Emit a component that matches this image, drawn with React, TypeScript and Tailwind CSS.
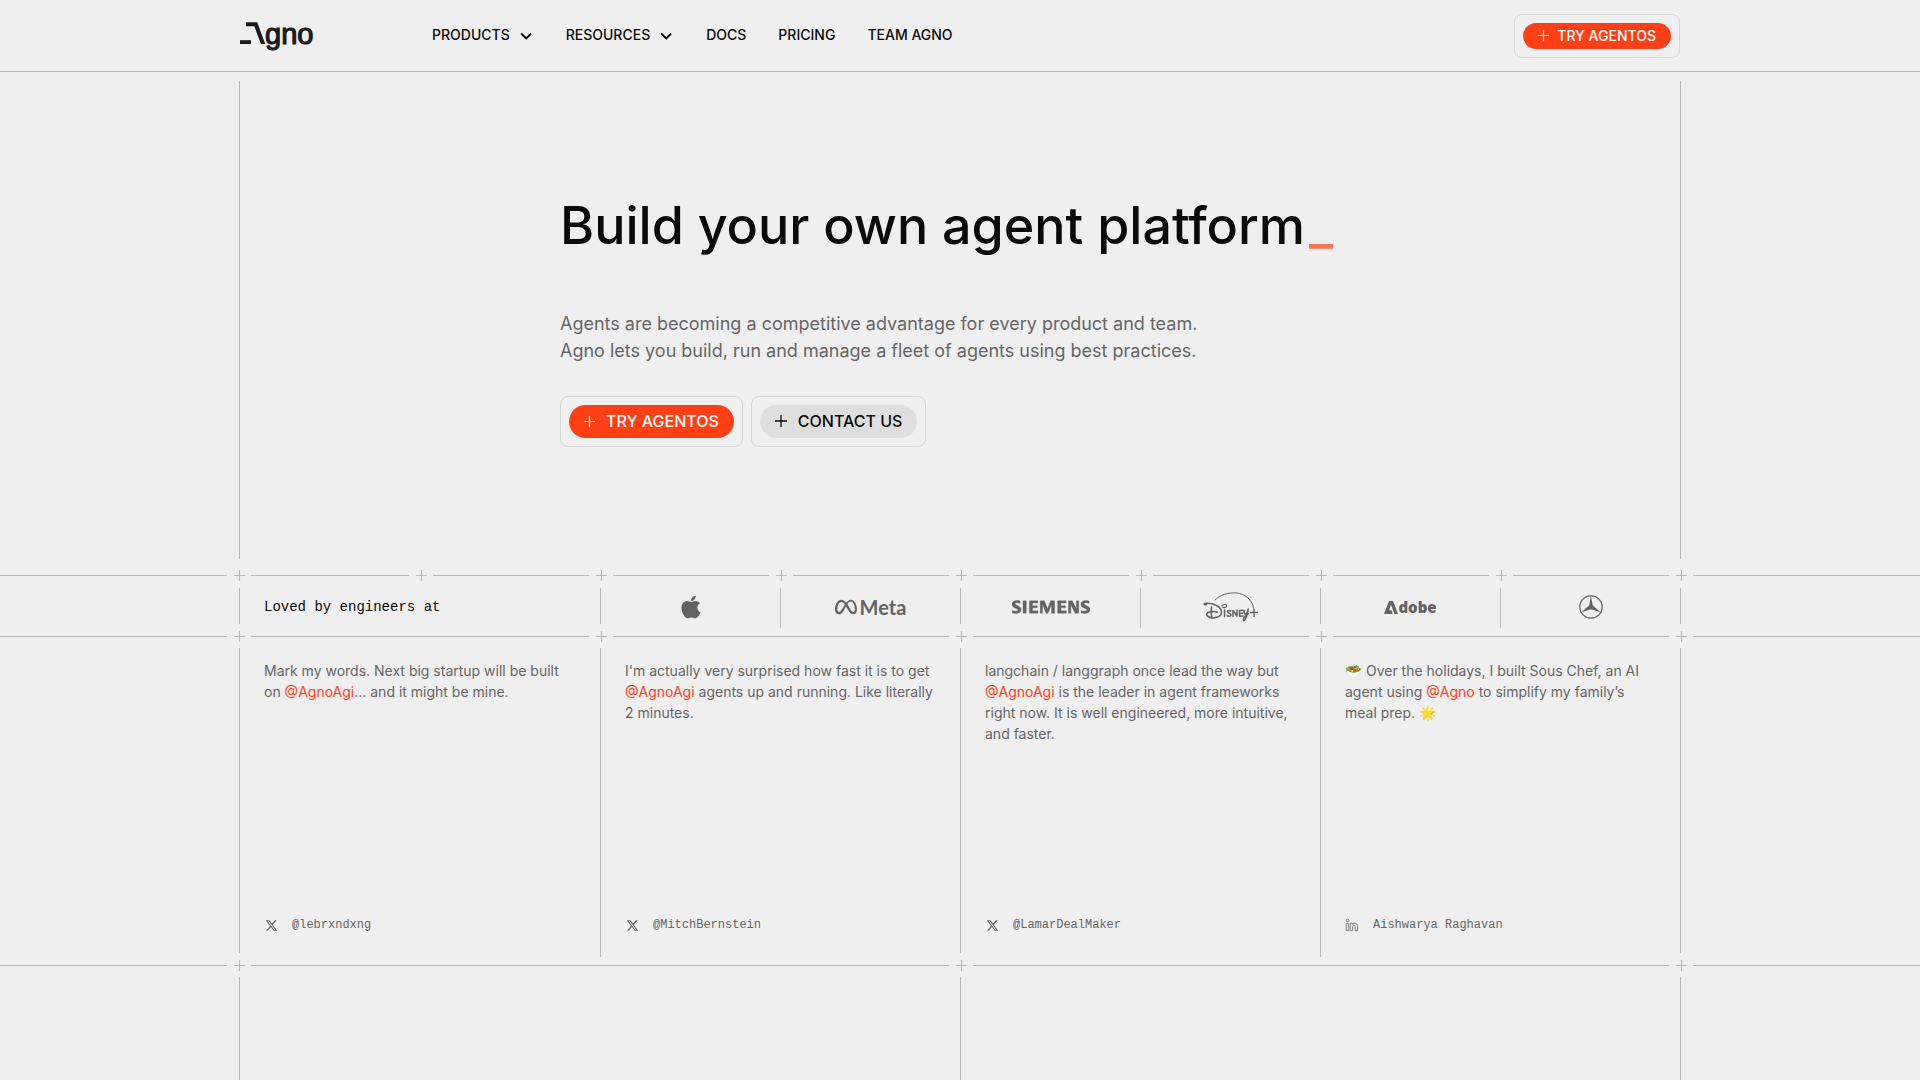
import type { ReactNode } from "react";
import clsx from "clsx";
import { FaApple, FaMeta, FaXTwitter } from "react-icons/fa6";
import { SiSiemens } from "react-icons/si";

const navItems = [
  { label: "PRODUCTS", menu: true },
  { label: "RESOURCES", menu: true },
  { label: "DOCS", menu: false },
  { label: "PRICING", menu: false },
  { label: "TEAM AGNO", menu: false },
];

const testimonials = [
  {
    author: "@lebrxndxng",
    source: "x",
    text: (
      <>
        Mark my words. Next big startup will be built on{" "}
        <Mention name="@AgnoAgi" />
        ... and it might be mine.
      </>
    ),
  },
  {
    author: "@MitchBernstein",
    source: "x",
    text: (
      <>
        I'm actually very surprised how fast it is to get{" "}
        <Mention name="@AgnoAgi" /> agents up and running. Like literally 2
        minutes.
      </>
    ),
  },
  {
    author: "@LamarDealMaker",
    source: "x",
    text: (
      <>
        langchain / langgraph once lead the way but <Mention name="@AgnoAgi" />{" "}
        is the leader in agent frameworks right now. It is well engineered, more
        intuitive, and faster.
      </>
    ),
  },
  {
    author: "Aishwarya Raghavan",
    source: "linkedin",
    text: (
      <>
        🥗 Over the holidays, I built Sous Chef, an AI agent using{" "}
        <Mention name="@Agno" /> to simplify my family’s meal prep. 🌟
      </>
    ),
  },
];

const logos = [
  { name: "Apple", mark: <FaApple className="size-[26px]" /> },
  { name: "Meta", mark: <MetaLogo /> },
  { name: "Siemens", mark: <SiSiemens className="size-[78px]" stroke="currentColor" strokeWidth="0.1" /> },
  { name: "Disney+", mark: <DisneyLogo /> },
  { name: "Adobe", mark: <AdobeLogo /> },
  { name: "Mercedes-Benz", mark: <MercedesLogo /> },
];

function Mention({ name }: { name: string }) {
  return (
    <a href="#" className="text-[#ff4017]">
      {name}
    </a>
  );
}

function AgnoLogo() {
  return (
    <svg viewBox="0 -6 76 44" className="h-11 w-[76px]" fill="#1a1a1a" role="img" aria-label="Agno">
      <path d="M6 2.300h11.200L25.200 24h-4.300L14.300 6.200H6z" />
      <path d="M0 20.200h11V24H0z" />
      <text
        x="25"
        y="23.5"
        fontSize="29"
        stroke="#1a1a1a"
        strokeWidth="1.2"
        className="font-['Liberation_Sans',sans-serif]"
      >
        gno
      </text>
    </svg>
  );
}

function MetaLogo() {
  return (
    <span className="flex items-center gap-[3px]">
      <FaMeta className="size-[22px]" />
      <span className="font-['Lato',sans-serif] text-xl leading-5 font-bold">Meta</span>
    </span>
  );
}

function DisneyLogo() {
  return (
    <svg viewBox="0 0 56 32" className="h-8 w-14" fill="none" stroke="currentColor">
      <path d="M12 9C22-1.500 47-2 50.500 17" strokeWidth="1" strokeLinecap="round" />
      <path d="M47 21.500h8M51 17.500v8.500" strokeWidth="1.400" />
      <path
        d="M3.500 13.500C.8 14.300.3 12.600 3 12.300c7-.7 15.500 3.500 15.500 8.700 0 5-6.500 6.800-11.500 5.300-4-1.200-4.500-4-.5-5.200 3-.9 6-.6 8 .2M8.500 16c-.5 3.500-.6 7.500.4 11"
        strokeWidth="1.600"
        strokeLinecap="round"
      />
      <path d="M18.500 15.500c1-2.500 5-2.500 5.200-.9.200 1.700-3 2.600-4.200 1.400" strokeWidth="1.200" />
      <path
        d="M21.500 19v6.500M28 20c-3-1.500-4.500.6-2.600 1.800s3.300 1.500 2.300 2.800c-.8 1-2.600.8-3.600 0M30 25.500V19.500l4 5.500V19M40 19.300l-3.500.3v5.600l3.500-.3M37 22.300h2.500M41 19.500c-.5 4.500 3 5 4-.8M45.300 18c-.5 4-2.800 11.500-4.300 11.500-1.500 0-.6-4 4.500-7"
        strokeWidth="1.500"
        strokeLinecap="round"
        strokeLinejoin="round"
      />
    </svg>
  );
}

function AdobeLogo() {
  return (
    <span className="flex items-center">
      <svg viewBox="0 0 14 13" className="h-[13px] w-3.5" fill="currentColor">
        <path d="M0 13 5 0h4l5 13h-3.500L7 3.800 5.100 9.200h2.300L8.600 13z" />
      </svg>
      <span className="font-['Open_Sans',sans-serif] text-[15px] leading-5 font-extrabold">dobe</span>
    </span>
  );
}

function MercedesLogo() {
  return (
    <svg viewBox="0 0 24 24" className="size-6" fill="currentColor">
      <circle cx="12" cy="12" r="11.200" fill="none" stroke="currentColor" strokeWidth="1.200" />
      <path d="M12 1l1.800 9.500 7.900 6.800L12 14.200l-9.700 3.100 7.900-6.800z" />
    </svg>
  );
}

function LinkedInIcon() {
  return (
    <svg viewBox="0 0 16 16" className="size-4 shrink-0" fill="none" stroke="currentColor" strokeWidth="0.8">
      <circle cx="3.500" cy="3.500" r="1.300" />
      <path d="M2.300 6.300h2.400v7.400H2.300zM6.300 13.700V6.300h2.200v1c1.200-1.700 5-1.600 5 1.700v4.700h-2.300V9.500c0-1.800-2.600-1.700-2.600 0v4.200z" />
    </svg>
  );
}

function PlusIcon({ className }: { className?: string }) {
  return (
    <svg viewBox="0 0 12 12" className={clsx("shrink-0", className)} stroke="currentColor" fill="none">
      <path d="M0 6h12M6 0v12" strokeWidth="1.300" />
    </svg>
  );
}

function FramedButton({
  children,
  small,
  muted,
}: {
  children: ReactNode;
  small?: boolean;
  muted?: boolean;
}) {
  return (
    <div className="rounded-lg border border-[#d6d6d6] p-2">
      <button
        className={clsx(
          "flex items-center rounded-full px-[15px] font-medium",
          small ? "h-[26px] gap-2 text-sm" : "h-[33px] gap-[11px] pb-px text-base",
          muted ? "bg-[#dfdfdf] text-[#0a0a0a]" : "bg-[#ff4017] text-white"
        )}
      >
        <PlusIcon className={muted ? "size-3" : "size-[11px]"} />
        {children}
      </button>
    </div>
  );
}

/* Grid lines */

function Line({ className = "my-px" }: { className?: string }) {
  return <div className={clsx("w-px shrink-0 bg-[#b8b8b8]", className)} />;
}

function Cross() {
  return (
    <div className="flex w-6 shrink-0 justify-center">
      <svg viewBox="0 0 11 11" className="size-[11px]" stroke="#b8b8b8" strokeWidth="1.100">
        <path d="M0 5.500h11M5.500 0v11" />
      </svg>
    </div>
  );
}

function Rule({ columns, count }: { columns: string; count: number }) {
  return (
    <div className="flex h-[23px] items-center">
      <div className="h-px flex-1 bg-[#b8b8b8]" />
      <div className="flex w-[1466px] items-center">
        <div className={clsx("grid flex-1", columns)}>
          {Array.from({ length: count }, (_, i) => (
            <div key={i} className="flex items-center">
              <Cross />
              <div className="h-px flex-1 bg-[#b8b8b8]" />
            </div>
          ))}
        </div>
        <Cross />
      </div>
      <div className="h-px flex-1 bg-[#b8b8b8]" />
    </div>
  );
}

export default function App() {
  return (
    <div className="flex min-h-screen flex-col bg-[#efefef] font-['Inter',sans-serif] text-[#0a0a0a]">
      <header className="border-b border-[#b8b8b8]">
        <div className="mx-auto flex h-[71px] w-full max-w-[1440px] items-center">
          <a href="#" className="mr-[116px]">
            <AgnoLogo />
          </a>
          <nav className="flex flex-1 items-center gap-8 pb-0.5 text-sm font-medium">
            {navItems.map((item) =>
              item.menu ? (
                <button key={item.label} className="flex items-center gap-2">
                  {item.label}
                  <svg viewBox="0 0 16 16" className="size-4" fill="none" stroke="currentColor" strokeWidth="1.800">
                    <path d="M3.200 6.500l5 5 5-5" />
                  </svg>
                </button>
              ) : (
                <a key={item.label} href="#">
                  {item.label}
                </a>
              )
            )}
          </nav>
          <FramedButton small>TRY AGENTOS</FramedButton>
        </div>
      </header>

      <main className="flex flex-1 flex-col">
        {/* Hero */}
        <section className="mx-auto flex w-full max-w-[1442px]">
          <Line className="mt-[9px] mb-[5px]" />
          <div className="min-w-0 flex-1 pt-[124px] pb-[117px] pl-80">
            <h1 className="text-[52px] leading-[60px] font-medium">
              Build your own agent platform
              <span className="ml-1 text-[#ff4017]/70">_</span>
            </h1>
            <p className="mt-[54px] text-lg leading-[27px] text-[#666]">
              Agents are becoming a competitive advantage for every product and team.
              <br />
              Agno lets you build, run and manage a fleet of agents using best practices.
            </p>
            <div className="mt-8 flex gap-2">
              <FramedButton>TRY AGENTOS</FramedButton>
              <FramedButton muted>CONTACT US</FramedButton>
            </div>
          </div>
          <Line className="mt-[9px] mb-[5px]" />
        </section>

        <Rule columns="grid-cols-[182fr_repeat(7,180fr)]" count={8} />

        {/* Logos */}
        <section className="mx-auto grid h-[38px] w-full max-w-[1442px] grid-cols-[361fr_repeat(5,180fr)_181fr] grid-rows-1">
          <div className="flex">
            <Line />
            <p className="self-center pt-0.5 pl-6 font-['Liberation_Mono',monospace] text-sm">
              Loved by engineers at
            </p>
          </div>
          {logos.map((logo, i) => (
            <div key={logo.name} className="flex text-[#636363]">
              <Line className={i % 2 === 1 ? "mt-px -mb-[3px]" : "my-px"} />
              <div className="flex flex-1 items-center justify-center pt-0.5" title={logo.name}>
                {logo.mark}
              </div>
              {i === logos.length - 1 && <Line />}
            </div>
          ))}
        </section>

        <Rule columns="grid-cols-[362fr_repeat(3,360fr)]" count={4} />

        {/* Testimonials */}
        <section className="mx-auto grid h-[306px] w-full max-w-[1442px] grid-cols-[361fr_360fr_360fr_361fr] text-[#666]">
          {testimonials.map((item, i) => (
            <div key={item.author} className="flex">
              <Line className={i % 2 === 1 ? "-mb-[3px]" : "mb-px"} />
              <div className="flex flex-1 flex-col justify-between px-6 pt-3 pb-5">
                <p className="text-sm leading-[21px]">{item.text}</p>
                <div className="flex items-center gap-3.5 font-['Liberation_Mono',monospace] text-xs leading-[18px]">
                  <span className="flex w-3.5 justify-center">
                    {item.source === "x" ? <FaXTwitter className="size-[13px]" /> : <LinkedInIcon />}
                  </span>
                  {item.author}
                </div>
              </div>
              {i === testimonials.length - 1 && <Line className="mb-px" />}
            </div>
          ))}
        </section>

        <Rule columns="grid-cols-[722fr_720fr]" count={2} />

        <section className="mx-auto grid w-full max-w-[1442px] flex-1 grid-cols-2">
          <div className="flex">
            <Line className="" />
          </div>
          <div className="flex justify-between">
            <Line className="" />
            <Line className="" />
          </div>
        </section>
      </main>
    </div>
  );
}
